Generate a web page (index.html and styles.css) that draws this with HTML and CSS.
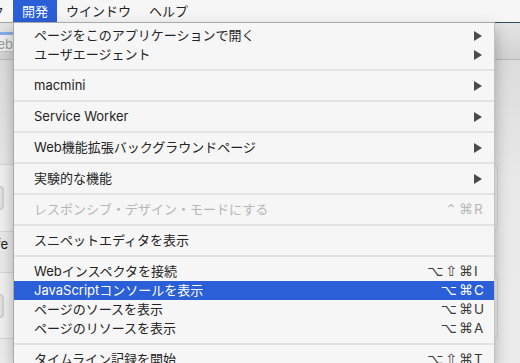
FILE: index.html
```html
<!DOCTYPE html>
<html lang="ja">
<head>
<meta charset="utf-8">
<title>開発メニュー</title>
<link rel="stylesheet" href="styles.css">
</head>
<body>
<div class="menubar">
  <div class="mb-clip"><span>ク</span></div>
  <span class="mb-item active">開発</span>
  <span class="mb-item">ウインドウ</span>
  <span class="mb-item">ヘルプ</span>
</div>
<div class="window">
  <div class="toolbar">
    <div class="search-clip"><span class="search-text">検索/Web</span></div>
  </div>
  <div class="content">
    <div class="card"><div class="card-icon"></div></div>
    <div class="label-clip"><span>Safe</span></div>
    <div class="card card2"><div class="card-icon"></div></div>
  </div>
</div>
<div class="menu">
  <div class="item"><span class="text">ページをこのアプリケーションで開く</span><span class="arrow"></span></div>
  <div class="item"><span class="text">ユーザエージェント</span><span class="arrow"></span></div>
  <div class="sep"></div>
  <div class="item"><span class="text">macmini</span><span class="arrow"></span></div>
  <div class="sep"></div>
  <div class="item"><span class="text">Service Worker</span><span class="arrow"></span></div>
  <div class="sep"></div>
  <div class="item"><span class="text">Web機能拡張バックグラウンドページ</span><span class="arrow"></span></div>
  <div class="sep"></div>
  <div class="item"><span class="text">実験的な機能</span><span class="arrow"></span></div>
  <div class="sep"></div>
  <div class="item disabled"><span class="text">レスポンシブ・デザイン・モードにする</span><span class="sc"><span class="mods">⌃⌘</span><span class="key">R</span></span></div>
  <div class="sep"></div>
  <div class="item"><span class="text">スニペットエディタを表示</span></div>
  <div class="sep"></div>
  <div class="item"><span class="text">Webインスペクタを接続</span><span class="sc"><span class="mods">⌥⇧⌘</span><span class="key">I</span></span></div>
  <div class="item selected"><span class="text">JavaScriptコンソールを表示</span><span class="sc"><span class="mods">⌥⌘</span><span class="key">C</span></span></div>
  <div class="item"><span class="text">ページのソースを表示</span><span class="sc"><span class="mods">⌥⌘</span><span class="key">U</span></span></div>
  <div class="item"><span class="text">ページのリソースを表示</span><span class="sc"><span class="mods">⌥⌘</span><span class="key">A</span></span></div>
  <div class="sep"></div>
  <div class="item"><span class="text">タイムライン記録を開始</span><span class="sc"><span class="mods">⌥⇧⌘</span><span class="key">T</span></span></div>
</div>
</body>
</html>
```

FILE: styles.css
```css
html, body {
  margin: 0;
  padding: 0;
}

body {
  width: 520px;
  height: 363px;
  overflow: hidden;
  position: relative;
  background: #e9e9e9;
  font-family: "Inter", "Noto Sans CJK JP", sans-serif;
  font-size: 13px;
  color: #232323;
}

/* ---------- menu bar ---------- */
.menubar {
  height: 22px;
  display: flex;
  align-items: stretch;
  background: #f6f6f6;
}

.mb-clip {
  width: 13px;
  box-sizing: border-box;
  padding-right: 9px;
  display: flex;
  justify-content: flex-end;
  line-height: 22px;
  color: #222;
  white-space: nowrap;
}

.mb-item {
  padding: 0 9px;
  line-height: 22px;
  color: #222;
  white-space: nowrap;
}

.mb-item.active {
  background: #2b5fd8;
  color: #fff;
}

/* ---------- background window ---------- */
.window {
  display: flex;
  flex-direction: column;
  height: 341px;
}

.toolbar {
  height: 38px;
  box-sizing: border-box;
  border-top: 1px solid #a3a3a3;
  border-bottom: 1px solid #b9b9b9;
  background: linear-gradient(#e4e4e4, #d2d2d2);
  display: flex;
  align-items: center;
  position: relative;
}

.toolbar::before {
  content: "";
  position: absolute;
  left: 495px;
  right: 0;
  top: -1px;
  height: 1px;
  background: #2d4a5a;
}

.search-clip {
  width: 13px;
  height: 20px;
  margin-top: 2px;
  box-sizing: border-box;
  display: flex;
  justify-content: flex-end;
  align-items: center;
  background: #eeeeee;
  border-top: 3px solid #86aee8;
  border-bottom: 1px solid #c4c4c4;
  color: #9a9a9a;
  font-size: 13px;
  white-space: nowrap;
}

.content {
  flex: 1;
  display: flex;
  flex-direction: column;
  padding-top: 104px;
  background: linear-gradient(#dcdcdc, #e9e9e9 40%, #ececec);
}

.card {
  height: 68px;
  margin-left: -30px;
  margin-right: 22px;
  box-sizing: border-box;
  border: 1px solid #d6d6d6;
  border-radius: 6px;
  background: #efefef;
  display: flex;
  align-items: center;
  padding-left: 11px;
}

.card2 {
  height: 67px;
}

.card-icon {
  width: 22px;
  height: 24px;
  box-sizing: border-box;
  border: 2px solid #cfcfcf;
  border-radius: 4px;
  background: #e2e2e2;
}

.label-clip {
  width: 8px;
  height: 40px;
  box-sizing: border-box;
  padding-top: 4px;
  line-height: 16px;
  display: flex;
  justify-content: flex-end;
  white-space: nowrap;
  color: #1e1e1e;
}

/* ---------- dropdown menu ---------- */
.menu {
  position: absolute;
  left: 13px;
  top: 22px;
  width: 482px;
  height: 341px;
  overflow: hidden;
  box-sizing: border-box;
  padding-top: 3px;
  background: #f6f6f6;
  border: 1px solid #a9a9a9;
  border-right-color: #c2c2c2;
  border-bottom: 0;
  box-shadow: 0 6px 14px rgba(0, 0, 0, 0.28);
}

.item {
  height: 19px;
  display: flex;
  align-items: center;
  padding: 0 9px 0 20px;
  line-height: 19px;
  white-space: nowrap;
  color: #232323;
}

.item .text {
  flex: 1;
}

.item.disabled {
  color: #b6b6b6;
}

.item.selected {
  background: #2b5fd8;
  color: #fff;
}

.arrow {
  width: 0;
  height: 0;
  margin-right: 3px;
  border-left: 8px solid #4b4b4b;
  border-top: 5px solid transparent;
  border-bottom: 5px solid transparent;
}

.sc {
  display: flex;
  align-items: center;
  color: #3a3a3a;
}

.item.disabled .sc {
  color: #b6b6b6;
}

.item.selected .sc {
  color: #fff;
}

.mods {
  font-family: "DejaVu Sans", sans-serif;
  font-size: 14px;
  letter-spacing: 2px;
}

.key {
  width: 11px;
  margin-left: -1px;
  text-align: left;
  font-family: "Inter", sans-serif;
  font-size: 13.5px;
}

.sep {
  height: 2px;
  margin: 5px 0;
  background: #e3e3e3;
}
```
